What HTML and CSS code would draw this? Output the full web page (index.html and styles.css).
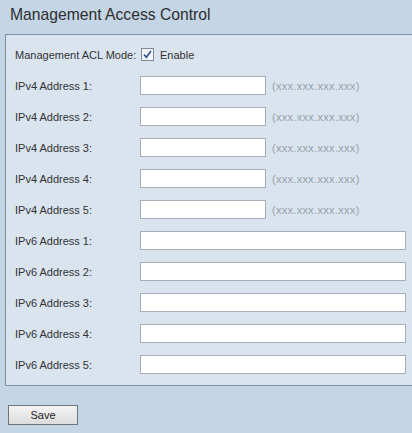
FILE: index.html
```html
<!DOCTYPE html>
<html>
<head>
<meta charset="utf-8">
<link rel="stylesheet" href="styles.css">
</head>
<body>
<div class="page">
  <h1 class="title">Management Access Control</h1>
  <div class="panel">
    <div class="row">
      <span class="label">Management ACL Mode:</span>
      <span class="check"><svg width="13" height="13" viewBox="0 0 13 13"><rect x="0.5" y="0.5" width="12" height="12" fill="#f4f6f9" stroke="#7f8a99"/><path d="M3 6.5 L5.3 9.3 L10 3" fill="none" stroke="#3d5a9a" stroke-width="1.8"/></svg></span>
      <span class="enable">Enable</span>
    </div>
    <div class="row"><span class="label">IPv4 Address 1:</span><input class="in4" type="text"><span class="hint">(xxx.xxx.xxx.xxx)</span></div>
    <div class="row"><span class="label">IPv4 Address 2:</span><input class="in4" type="text"><span class="hint">(xxx.xxx.xxx.xxx)</span></div>
    <div class="row"><span class="label">IPv4 Address 3:</span><input class="in4" type="text"><span class="hint">(xxx.xxx.xxx.xxx)</span></div>
    <div class="row"><span class="label">IPv4 Address 4:</span><input class="in4" type="text"><span class="hint">(xxx.xxx.xxx.xxx)</span></div>
    <div class="row"><span class="label">IPv4 Address 5:</span><input class="in4" type="text"><span class="hint">(xxx.xxx.xxx.xxx)</span></div>
    <div class="row"><span class="label">IPv6 Address 1:</span><input class="in6" type="text"></div>
    <div class="row"><span class="label">IPv6 Address 2:</span><input class="in6" type="text"></div>
    <div class="row"><span class="label">IPv6 Address 3:</span><input class="in6" type="text"></div>
    <div class="row"><span class="label">IPv6 Address 4:</span><input class="in6" type="text"></div>
    <div class="row"><span class="label">IPv6 Address 5:</span><input class="in6" type="text"></div>
  </div>
  <div class="actions"><button class="save" type="button">Save</button></div>
</div>
</body>
</html>
```
FILE: styles.css
```css
html, body {
  margin: 0;
  padding: 0;
  background: #c4d5e6;
}
.page {
  width: 412px;
  height: 433px;
  overflow: hidden;
  background: #c4d5e6;
  font-family: Arial, "Liberation Sans", sans-serif;
  color: #333;
}
.title {
  margin: 0;
  height: 34px;
  box-sizing: border-box;
  padding: 5px 0 0 10px;
  font-size: 15.7px;
  font-weight: normal;
  color: #2e2e2e;
  line-height: 20px;
}
.panel {
  margin-left: 5px;
  background: #d9e4ef;
  border-top: 1px solid #7f8fa3;
  border-left: 1px solid #7f8fa3;
  border-bottom: 1px solid #7f8fa3;
  padding: 4px 0 5px 9px;
}
.row {
  display: flex;
  align-items: center;
  height: 31px;
  font-size: 11px;
}
.label {
  width: 125px;
  flex: none;
}
.check {
  display: flex;
  margin: 0 6px 0 1px;
}
.enable {
  color: #333;
}
input {
  box-sizing: border-box;
  height: 19px;
  margin: 0;
  border: 1px solid #a6adb6;
  background: #fff;
  padding: 0;
}
.in4 {
  width: 126px;
}
.in6 {
  width: 266px;
}
.hint {
  margin-left: 6px;
  color: #9aa0a8;
  letter-spacing: 0.3px;
}
.actions {
  padding: 19px 0 0 8px;
}
.save {
  width: 70px;
  height: 20px;
  border: 1px solid #6f747b;
  background: linear-gradient(#f4f4f4, #dcdcdc);
  font-family: Arial, "Liberation Sans", sans-serif;
  font-size: 11px;
  color: #222;
  padding: 0;
  display: block;
}
```
